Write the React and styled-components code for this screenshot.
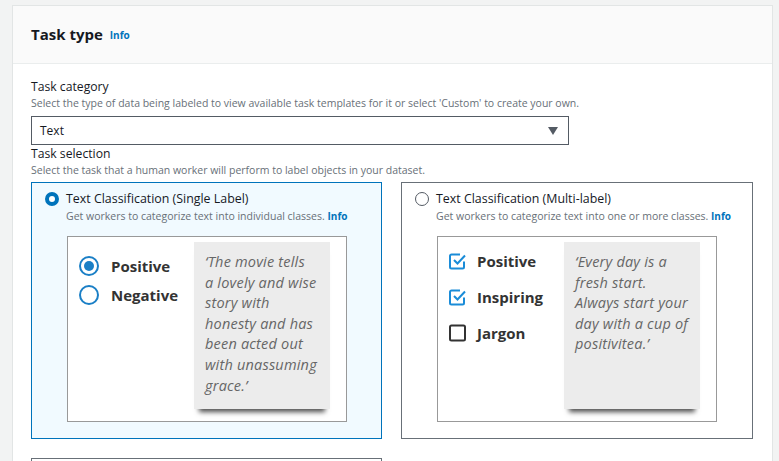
import React from "react";
import styled, { createGlobalStyle } from "styled-components";

const Global = createGlobalStyle`
  html, body { margin: 0; padding: 0; background: #f2f3f3; }
  body { font-family: "Open Sans", "Noto Sans", sans-serif; color: #16191f; }
  * { box-sizing: border-box; }
`;

const Page = styled.div`
  padding: 5px 6px 0 12px;
  height: 461px;
  overflow: hidden;
`;

const Panel = styled.section`
  background: #fff;
  border: 1px solid #e2e5e5;
  border-bottom: none;
  height: 100%;
`;

const Header = styled.header`
  height: 58px;
  background: #fafafa;
  border-bottom: 1px solid #eaeded;
  display: flex;
  align-items: center;
  padding: 0 18px 0 18px;
  gap: 7px;
`;

const Title = styled.h2`
  margin: 0 0 1px 0;
  font-size: 15px;
  font-weight: 700;
  color: #16191f;
`;

const InfoLink = styled.a`
  color: #0073bb;
  font-weight: 700;
  font-size: ${(p) => p.$size || 10}px;
  text-decoration: none;
`;

const Body = styled.div`
  padding: 14px 18px 0 18px;
  display: flex;
  flex-direction: column;
`;

const Label = styled.div`
  font-size: 12.2px;
  line-height: 18px;
  color: #16191f;
`;

const Desc = styled.div`
  font-size: 10.5px;
  line-height: 14px;
  color: #687078;
  margin-bottom: ${(p) => p.$mb || 0}px;
`;

const Select = styled.div`
  width: 538px;
  height: 29px;
  border: 1px solid #545b64;
  display: flex;
  align-items: center;
  justify-content: space-between;
  padding: 0 10px 0 8px;
  font-size: 12px;
  color: #16191f;
`;

const Caret = styled.span`
  width: 0;
  height: 0;
  border-left: 5px solid transparent;
  border-right: 5px solid transparent;
  border-top: 8px solid #545b64;
`;

const Cards = styled.div`
  display: grid;
  grid-template-columns: 351px 352px;
  column-gap: 19px;
  row-gap: 19px;
`;

const Card = styled.div`
  height: 257px;
  border: 1px solid ${(p) => (p.$selected ? "#0073bb" : "#687078")};
  background: ${(p) => (p.$selected ? "#f1faff" : "#fff")};
  padding: 8px 13px 0 13px;
  display: flex;
  flex-direction: column;
`;

const CardHead = styled.div`
  display: flex;
  align-items: center;
  gap: 7px;
  height: 16px;
`;

const CardTitle = styled.div`
  font-size: 12.4px;
  line-height: 16px;
  color: #16191f;
`;

const CardDesc = styled.div`
  font-size: 10.5px;
  line-height: 14px;
  color: #687078;
  margin: 2px 0 0 21px;
`;

const SmallRadio = styled.span`
  width: 14px;
  height: 14px;
  border-radius: 50%;
  flex: none;
  border: ${(p) => (p.$on ? "4px solid #0073bb" : "1px solid #545b64")};
  background: #fff;
`;

const Illustration = styled.div`
  margin: 13px 0 0 22px;
  width: 280px;
  height: 186px;
  border: 1px solid #999;
  background: #fff;
  display: flex;
  padding: 5px 16px 0 11px;
`;

const Options = styled.div`
  flex: 1;
  display: flex;
  flex-direction: column;
  gap: ${(p) => p.$gap}px;
  padding-top: ${(p) => p.$pt}px;
`;

const Option = styled.div`
  display: flex;
  align-items: center;
  gap: ${(p) => p.$gap}px;
  font-family: "Open Sans", "Noto Sans", sans-serif;
  font-weight: 700;
  font-size: 15px;
  line-height: 20px;
  color: #333;
`;

const BigRadio = styled.span`
  width: 20px;
  height: 20px;
  border-radius: 50%;
  border: 2px solid #1a7fc6;
  display: flex;
  align-items: center;
  justify-content: center;
  flex: none;
  &::after {
    content: "";
    width: 10px;
    height: 10px;
    border-radius: 50%;
    background: ${(p) => (p.$on ? "#1a7fc6" : "transparent")};
  }
`;

const Quote = styled.div`
  width: 136px;
  height: 167px;
  background: #ececec;
  flex: none;
  padding: 10px 0 0 11px;
  font-style: italic;
  font-size: 14.5px;
  line-height: 20.6px;
  letter-spacing: 0.2px;
  color: #666;
  white-space: nowrap;
  box-shadow: 0 8px 5px -5px rgba(0, 0, 0, 0.7);
`;

const Check = ({ on }) =>
  on ? (
    <svg width="18" height="18" viewBox="0 0 18 18" style={{ flex: "none" }}>
      <path
        d="M15 9.5V15a1.5 1.5 0 0 1-1.5 1.5h-11A1.5 1.5 0 0 1 1 15V4a1.5 1.5 0 0 1 1.5-1.5H11"
        fill="none"
        stroke="#1a8cd8"
        strokeWidth="2"
      />
      <path d="M5 8l3.5 3.5L16 3.5" fill="none" stroke="#1a8cd8" strokeWidth="2" />
    </svg>
  ) : (
    <svg width="18" height="18" viewBox="0 0 18 18" style={{ flex: "none" }}>
      <rect x="1" y="1.5" width="15" height="15" rx="1.5" fill="none" stroke="#333" strokeWidth="2" />
    </svg>
  );

const lines1 = ["‘The movie tells", "a lovely and wise", "story with", "honesty and has", "been acted out", "with unassuming", "grace.’"];
const lines2 = ["‘Every day is a", "fresh start.", "Always start your", "day with a cup of", "positivitea.’"];

export default function App() {
  return (
    <>
      <Global />
      <Page>
        <Panel>
          <Header>
            <Title>Task type</Title>
            <InfoLink href="#">Info</InfoLink>
          </Header>
          <Body>
            <Label>Task category</Label>
            <Desc $mb={6}>
              Select the type of data being labeled to view available task templates for it or select 'Custom' to
              create your own.
            </Desc>
            <Select>
              <span>Text</span>
              <Caret />
            </Select>
            <Label>Task selection</Label>
            <Desc $mb={5}>Select the task that a human worker will perform to label objects in your dataset.</Desc>
            <Cards>
              <Card $selected>
                <CardHead>
                  <SmallRadio $on />
                  <CardTitle>Text Classification (Single Label)</CardTitle>
                </CardHead>
                <CardDesc>
                  Get workers to categorize text into individual classes.{" "}
                  <InfoLink href="#">Info</InfoLink>
                </CardDesc>
                <Illustration>
                  <Options $gap={9} $pt={14}>
                    <Option $gap={12}>
                      <BigRadio $on />
                      Positive
                    </Option>
                    <Option $gap={12}>
                      <BigRadio />
                      Negative
                    </Option>
                  </Options>
                  <Quote>
                    {lines1.map((l, i) => (
                      <div key={i}>{l}</div>
                    ))}
                  </Quote>
                </Illustration>
              </Card>
              <Card>
                <CardHead>
                  <SmallRadio />
                  <CardTitle>Text Classification (Multi-label)</CardTitle>
                </CardHead>
                <CardDesc>
                  Get workers to categorize text into one or more classes.{" "}
                  <InfoLink href="#">Info</InfoLink>
                </CardDesc>
                <Illustration>
                  <Options $gap={16} $pt={9}>
                    <Option $gap={10}>
                      <Check on />
                      Positive
                    </Option>
                    <Option $gap={10}>
                      <Check on />
                      Inspiring
                    </Option>
                    <Option $gap={10}>
                      <Check />
                      Jargon
                    </Option>
                  </Options>
                  <Quote>
                    {lines2.map((l, i) => (
                      <div key={i}>{l}</div>
                    ))}
                  </Quote>
                </Illustration>
              </Card>
              <Card />
            </Cards>
          </Body>
        </Panel>
      </Page>
    </>
  );
}
